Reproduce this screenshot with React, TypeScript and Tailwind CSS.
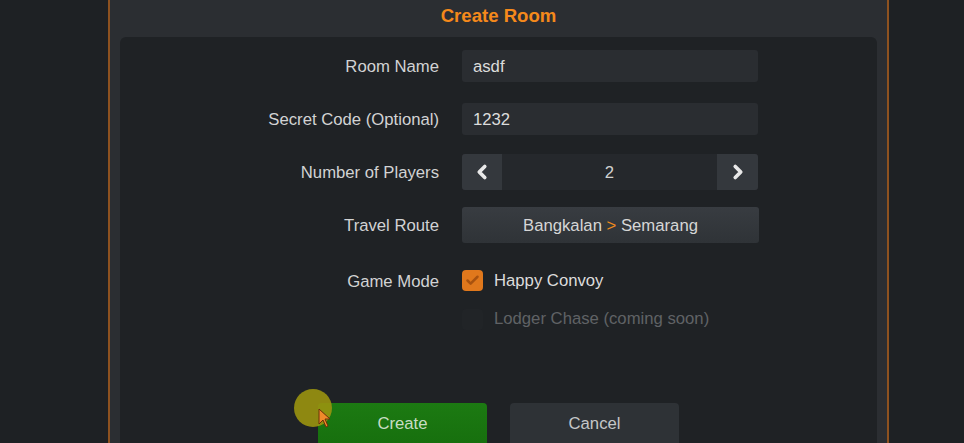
import React from 'react';
import { ChevronLeft, ChevronRight, Check } from 'lucide-react';

const font = { fontFamily: '"Liberation Sans", Arial, sans-serif' };

function Label({ children }: { children: React.ReactNode }) {
  return <div className="text-right text-[16.7px] text-[#d2d3d4] pr-[23px] pt-[2px]">{children}</div>;
}

export default function App() {
  return (
    <div className="w-[964px] h-[443px] overflow-hidden bg-[#1e2124] flex relative" style={font}>
      <div className="ml-[108px] w-[781px] h-full border-x-2 border-[#8e5220] bg-[#2b2e32] flex flex-col">
        <div className="h-[37px] flex items-center justify-center pb-[5px]">
          <span className="text-[18.6px] font-bold text-[#f5891b]">Create Room</span>
        </div>
        <div className="mx-[10px] flex-1 rounded-t-md bg-[#1f2225] pt-[13px] flex flex-col">
          <div className="grid grid-cols-[342px_296px] items-center">
            <Label>Room Name</Label>
            <div className="h-[32px] rounded-[3px] bg-[#2a2d31] flex items-center px-[11px] pt-[2px] text-[16.7px] text-[#dcdcdc]">asdf</div>
            <div className="h-[21px] col-span-2" />
            <Label>Secret Code (Optional)</Label>
            <div className="h-[32px] rounded-[3px] bg-[#2a2d31] flex items-center px-[11px] pt-[2px] text-[16.7px] text-[#dcdcdc]">1232</div>
            <div className="h-[19px] col-span-2" />
            <Label>Number of Players</Label>
            <div className="h-[36px] flex rounded-[3px] overflow-hidden bg-[#25282c]">
              <div className="w-[40px] bg-[#34383d] flex items-center justify-center">
                <ChevronLeft className="w-[22px] h-[22px] text-[#e8e8e8]" strokeWidth={4} />
              </div>
              <div className="flex-1 flex items-center justify-center pt-[2px] text-[16.7px] text-[#d0d0d0]">2</div>
              <div className="w-[41px] bg-[#34383d] flex items-center justify-center">
                <ChevronRight className="w-[22px] h-[22px] text-[#e8e8e8]" strokeWidth={4} />
              </div>
            </div>
            <div className="h-[17px] col-span-2" />
            <Label>Travel Route</Label>
            <div className="h-[36px] w-[297px] rounded-[3px] bg-gradient-to-b from-[#383c41] to-[#2f3337] flex items-center justify-center pt-[2px] text-[16.7px] text-[#d6d6d6]">
              Bangkalan&nbsp;<span className="text-[#f08a1c]">&gt;</span>&nbsp;Semarang
            </div>
            <div className="h-[19px] col-span-2" />
            <Label>Game Mode</Label>
            <div className="flex items-center gap-[11px] h-[37px]">
              <div className="w-[21px] h-[21px] rounded-[4px] bg-[#e0781c] flex items-center justify-center">
                <Check className="w-[15px] h-[15px] text-[#a8520f]" strokeWidth={4} />
              </div>
              <span className="text-[16.7px] text-[#dcdcdc]">Happy Convoy</span>
            </div>
            <div className="h-[2px] col-span-2" />
            <div />
            <div className="flex items-center gap-[11px] h-[36px]">
              <div className="w-[21px] h-[21px] rounded-[4px] bg-[#212427]" />
              <span className="text-[16.7px] text-[#606265]">Lodger Chase (coming soon)</span>
            </div>
          </div>
          <div className="mt-auto flex justify-center gap-[23px]">
            <div className="w-[169px] h-[40px] rounded-t-[4px] bg-gradient-to-b from-[#1c7a12] to-[#17700e] flex items-center justify-center pt-[2px] text-[16.7px] text-[#c8dcc4]">Create</div>
            <div className="w-[169px] h-[40px] rounded-t-[4px] bg-[#2e3236] flex items-center justify-center pt-[2px] text-[16.7px] text-[#c4c6c8]">Cancel</div>
          </div>
        </div>
      </div>
      <div className="absolute left-[294px] top-[389px] w-[38px] h-[38px] rounded-full bg-[#9a9410]/90" />
      <svg className="absolute left-[318px] top-[408px]" width="14" height="20" viewBox="0 0 14 20">
        <path d="M1 1 L1 16 L5 12 L8 19 L10 18 L7 11 L12 11 Z" fill="#f08a2a" stroke="#6b2e0a" strokeWidth="1" />
      </svg>
    </div>
  );
}
